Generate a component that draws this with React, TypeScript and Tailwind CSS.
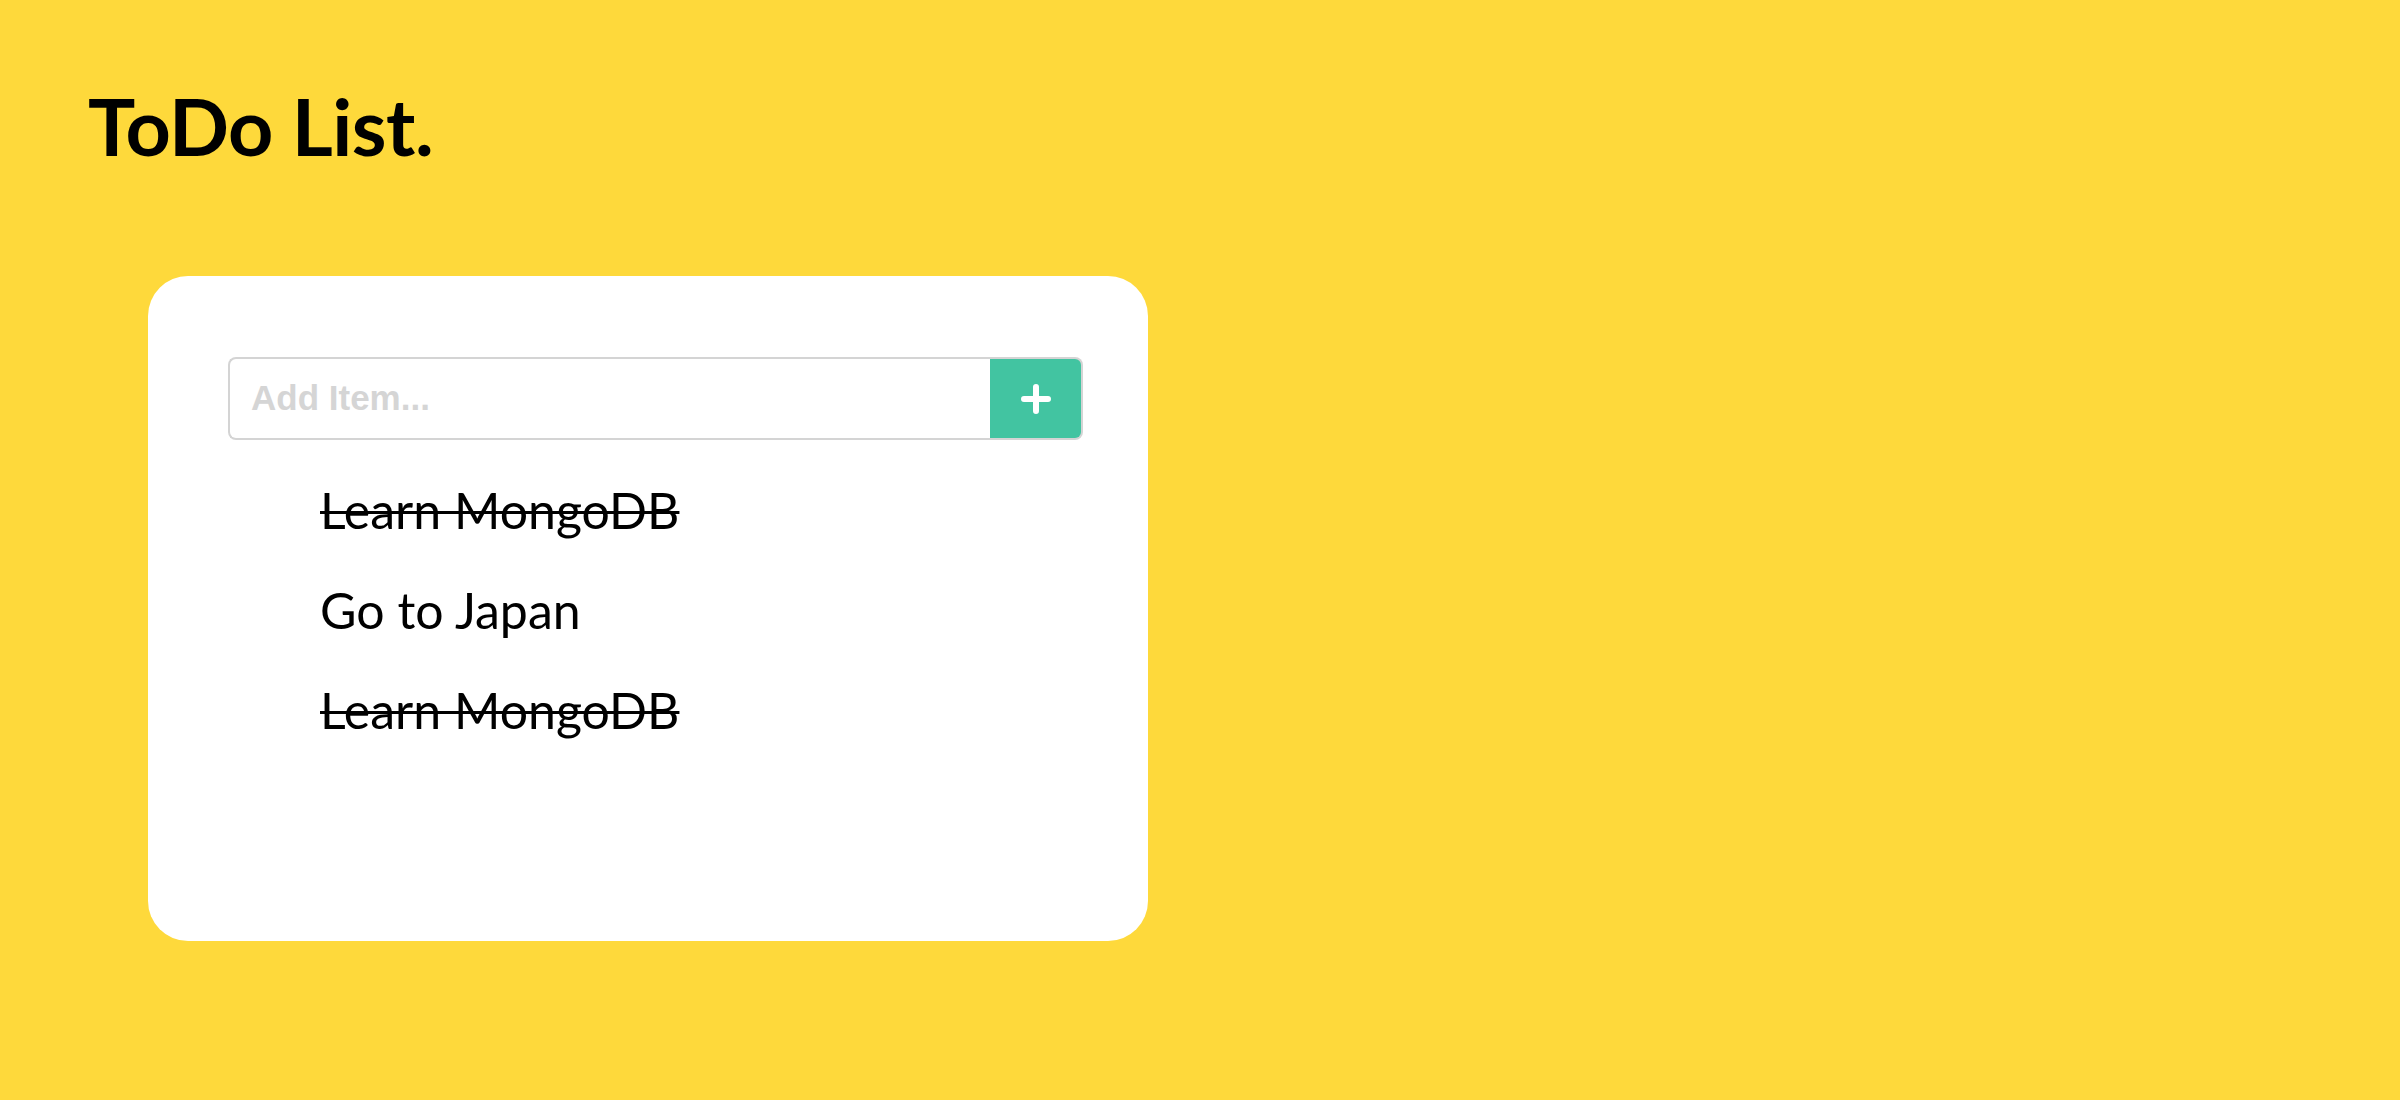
import { useState } from "react"

type Item = { id: number; text: string; done: boolean }

const initialItems: Item[] = [
  { id: 1, text: "Learn MongoDB", done: true },
  { id: 2, text: "Go to Japan", done: false },
  { id: 3, text: "Learn MongoDB", done: true },
]

export default function App() {
  const [items] = useState<Item[]>(initialItems)

  return (
    <div className="min-h-[1100px] w-full bg-[#fed93b] font-['Lato',sans-serif] text-black">
      <div className="pl-[88px] pt-[86px]">
        <h1 className="text-[79px] font-bold leading-none tracking-[-0.5px]">ToDo List.</h1>
      </div>

      <div className="ml-[148px] mt-[111px] w-[1000px] h-[665px] rounded-[40px] bg-white pt-[81px] pl-[80px]">
        <form className="flex w-[855px] h-[83px]" onSubmit={(e) => e.preventDefault()}>
          <input
            type="text"
            placeholder="Add Item..."
            className="flex-1 min-w-0 rounded-l-[8px] border-2 border-r-0 border-[#d4d4d4] bg-white px-[21px] font-['Liberation_Sans',Arial,sans-serif] text-[35px] font-bold outline-none placeholder:text-[#d5d5d5]"
          />
          <button
            type="submit"
            className="flex w-[93px] items-center justify-center rounded-r-[8px] border-2 border-l-0 border-[#d4d4d4] bg-[#42c4a1]"
          >
            <svg width="32" height="32" viewBox="0 0 32 32" fill="none">
              <path d="M16 4v24M4 16h24" stroke="white" strokeWidth="6" strokeLinecap="round" />
            </svg>
          </button>
        </form>

        <ul className="mt-[20px] pl-[92px]">
          {items.map((item) => (
            <li
              key={item.id}
              className={`text-[50px] leading-[100px] ${item.done ? "line-through decoration-[3px]" : ""}`}
            >
              {item.text}
            </li>
          ))}
        </ul>
      </div>
    </div>
  )
}
